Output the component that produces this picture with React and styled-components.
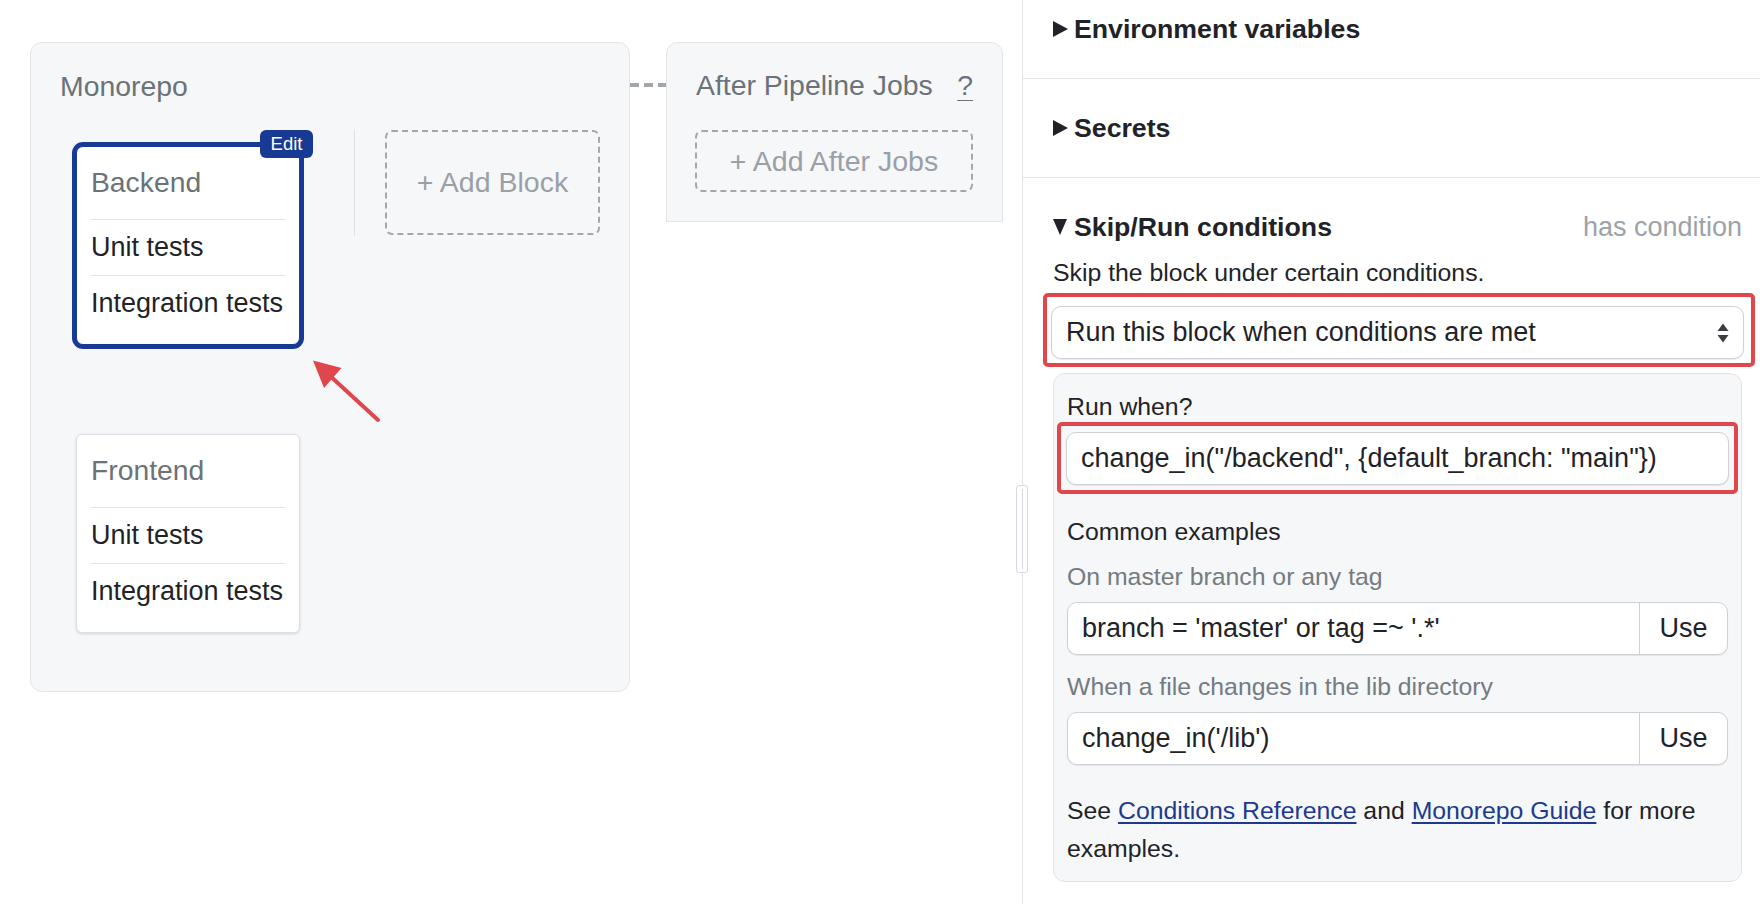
import React from 'react';
import styled, { createGlobalStyle } from 'styled-components';

const GlobalStyle = createGlobalStyle`
  html, body {
    margin: 0;
    padding: 0;
    background: #fff;
  }
  body {
    font-family: "Liberation Sans", Arial, sans-serif;
    color: #1f2328;
    overflow: hidden;
  }
`;

const Page = styled.div`
  display: flex;
  width: 1760px;
  height: 904px;
  overflow: hidden;
`;

/* ---------- canvas (left) ---------- */

const Canvas = styled.div`
  position: relative;
  flex: none;
  width: 1022px;
  box-sizing: border-box;
  padding: 42px 0 0 30px;
  display: flex;
  align-items: flex-start;
`;

const GroupPanel = styled.div`
  flex: none;
  box-sizing: border-box;
  width: ${p => p.$w}px;
  height: ${p => p.$h}px;
  background: #f6f7f9;
  border: 1px solid #e2e5e8;
  border-radius: ${p => p.$flatBottom ? '12px 12px 0 0' : '12px'};
  padding: ${p => p.$pad};
`;

const GroupTitle = styled.h2`
  margin: 0;
  font-size: 28.4px;
  font-weight: 400;
  line-height: 34px;
  color: #6b7278;
`;

const PanelHead = styled.div`
  display: flex;
  align-items: center;
  justify-content: space-between;
  padding-left: 1px;
`;

const Help = styled.span`
  font-size: 28.4px;
  line-height: 34px;
  color: #6b7278;
  text-decoration: underline;
  text-underline-offset: 5px;
  text-decoration-thickness: 1px;
`;

const BlocksRow = styled.div`
  display: flex;
  align-items: flex-start;
  margin-top: 26px;
`;

const CardStack = styled.div`
  display: flex;
  flex-direction: column;
  gap: 89px;
  margin-left: 16px;
  padding-top: 17px;
`;

const BlockCard = styled.div`
  position: relative;
  box-sizing: border-box;
  width: 224px;
  padding: 0 14px 12px;
  background: #fff;
  border: 1px solid ${p => p.$selected ? '#173b94' : '#dcdfe3'};
  border-radius: ${p => p.$selected ? '7px' : '6px'};
  box-shadow: ${p => p.$selected
    ? '0 0 0 4px #173b94'
    : '0 1px 3px rgba(0, 0, 0, 0.14)'};
`;

const EditBadge = styled.span`
  position: absolute;
  top: -17px;
  right: -14px;
  width: 53px;
  height: 28px;
  display: flex;
  align-items: center;
  justify-content: center;
  background: #173b94;
  color: #fff;
  border-radius: 6px;
  font-size: 18.5px;
  line-height: 1;
`;

const CardTitle = styled.div`
  box-sizing: border-box;
  height: 73px;
  padding-top: 19px;
  border-bottom: 1px solid #e3e5e8;
  font-size: 28.3px;
  line-height: 32px;
  color: #6b7278;
`;

const CardItem = styled.div`
  box-sizing: border-box;
  height: 56px;
  padding-top: 11px;
  border-bottom: 1px solid #e3e5e8;
  font-size: 27px;
  line-height: 32px;
  color: #1f2328;
  white-space: nowrap;

  &:last-child {
    border-bottom: none;
  }
`;

const ColumnRule = styled.div`
  flex: none;
  width: 1px;
  height: 107px;
  margin-left: 54px;
  background: #dfe2e5;
`;

const AddBox = styled.div`
  box-sizing: border-box;
  width: ${p => p.$w ? `${p.$w}px` : 'auto'};
  height: ${p => p.$h}px;
  margin: ${p => p.$m || '0'};
  display: flex;
  align-items: center;
  justify-content: center;
  border: 2px dashed #a2a8ad;
  border-radius: 7px;
  font-size: 28.5px;
  color: #9aa0a6;
  white-space: nowrap;
`;

const Connector = styled.div`
  flex: none;
  width: 36px;
  height: 4px;
  margin-top: 41px;
  background: repeating-linear-gradient(to right, #a0a6aa 0 9px, transparent 9px 14px);
`;

const Annotation = styled.svg`
  position: absolute;
  left: 300px;
  top: 350px;
  width: 90px;
  height: 80px;
  overflow: visible;
`;

/* ---------- splitter ---------- */

const Splitter = styled.div`
  position: relative;
  flex: none;
  width: 1px;
  background: #e1e4e7;
`;

const Handle = styled.div`
  position: absolute;
  top: 485px;
  left: -6px;
  box-sizing: border-box;
  width: 12px;
  height: 88px;
  background: #fff;
  border: 1px solid #d5d8dc;
  border-radius: 3px;

  &::after {
    content: "";
    position: absolute;
    left: 5px;
    top: 3px;
    bottom: 3px;
    width: 1px;
    background: #d5d8dc;
  }
`;

/* ---------- sidebar (right) ---------- */

const Sidebar = styled.aside`
  flex: 1;
  min-width: 0;
  overflow: hidden;
`;

const Scroller = styled.div`
  margin-top: -20px;
`;

const Section = styled.section`
  padding: 32px 18px ${p => p.$open ? '0' : '32px'} 30px;
  border-bottom: ${p => p.$open ? 'none' : '1px solid #e1e4e7'};
`;

const SectionHead = styled.div`
  display: flex;
  align-items: center;
  height: 34px;
  font-size: 26.7px;
  font-weight: 700;
  color: #1f2328;
  white-space: nowrap;
`;

const Caret = styled.span`
  flex: none;
  width: 0;
  height: 0;
  margin-right: ${p => p.$open ? '7px' : '6px'};
  ${p => p.$open
    ? `border-top: 16px solid #1f2328;
       border-left: 7.5px solid transparent;
       border-right: 7.5px solid transparent;`
    : `border-left: 15px solid #1f2328;
       border-top: 8.5px solid transparent;
       border-bottom: 8.5px solid transparent;`}
`;

const HeadNote = styled.span`
  margin-left: auto;
  font-weight: 400;
  font-size: 27px;
  color: #9ca2a8;
`;

const Text = styled.p`
  margin: ${p => p.$mt || 0}px 0 0;
  font-size: 24.8px;
  line-height: ${p => p.$lh || 32}px;
  color: ${p => p.$muted ? '#747b81' : '#1f2328'};
`;

const RedFrame = styled.div`
  box-sizing: border-box;
  margin: ${p => p.$m};
  padding: ${p => p.$p};
  border: 4px solid #e0474c;
  border-radius: 5px;
`;

const Field = styled.div`
  box-sizing: border-box;
  height: 53px;
  display: flex;
  align-items: center;
  padding: 0 14px;
  background: #fff;
  border: 1px solid #cdd1d5;
  border-radius: 10px;
  box-shadow: 0 1px 1px rgba(0, 0, 0, 0.08);
  font-size: 27px;
  color: #1f2328;
  white-space: nowrap;
`;

const UpDown = styled.svg`
  margin-left: auto;
  flex: none;
`;

const SubPanel = styled.div`
  margin-top: 6px;
  padding: 17px 13px 13px;
  background: #f6f7f9;
  border: 1px solid #e0e3e6;
  border-radius: 12px;
`;

const InputGroup = styled.div`
  box-sizing: border-box;
  height: 53px;
  margin-top: 9px;
  display: flex;
  background: #fff;
  border: 1px solid #cdd1d5;
  border-radius: 10px;
  box-shadow: 0 1px 1px rgba(0, 0, 0, 0.08);
  overflow: hidden;
  font-size: 27px;
  color: #1f2328;
`;

const GroupInput = styled.div`
  flex: 1;
  display: flex;
  align-items: center;
  padding-left: 14px;
  white-space: nowrap;
`;

const UseButton = styled.div`
  flex: none;
  width: 87px;
  display: flex;
  align-items: center;
  justify-content: center;
  border-left: 1px solid #cdd1d5;
`;

const DocLink = styled.a`
  color: #1c3a8f;
  text-decoration: underline;
  text-underline-offset: 3px;
`;

const examples = [
  { label: 'On master branch or any tag', code: "branch = 'master' or tag =~ '.*'", mt: 13 },
  { label: 'When a file changes in the lib directory', code: "change_in('/lib')", mt: 16 },
];

function Block({ name, selected }) {
  return (
    <BlockCard $selected={selected}>
      {selected && <EditBadge>Edit</EditBadge>}
      <CardTitle>{name}</CardTitle>
      <CardItem>Unit tests</CardItem>
      <CardItem>Integration tests</CardItem>
    </BlockCard>
  );
}

function App() {
  return (
    <>
      <GlobalStyle />
      <Page>
        <Canvas>
          <GroupPanel $w={600} $h={650} $pad="26px 29px 0">
            <GroupTitle>Monorepo</GroupTitle>
            <BlocksRow>
              <CardStack>
                <Block name="Backend" selected />
                <Block name="Frontend" />
              </CardStack>
              <ColumnRule />
              <AddBox $w={215} $h={105} $m="1px 0 0 30px">+ Add Block</AddBox>
            </BlocksRow>
          </GroupPanel>

          <Connector />

          <GroupPanel $w={337} $h={180} $pad="25px 29px 0 28px" $flatBottom>
            <PanelHead>
              <GroupTitle>After Pipeline Jobs</GroupTitle>
              <Help>?</Help>
            </PanelHead>
            <AddBox $h={62} $m="28px 0 0">+ Add After Jobs</AddBox>
          </GroupPanel>

          <Annotation viewBox="300 350 90 80">
            <line x1="378" y1="420" x2="328" y2="374" stroke="#e0474c" strokeWidth="4" strokeLinecap="round" />
            <polygon points="313,360.5 341.5,368 324,388" fill="#e0474c" />
          </Annotation>
        </Canvas>

        <Splitter>
          <Handle />
        </Splitter>

        <Sidebar>
          <Scroller>
            <Section>
              <SectionHead><Caret />Environment variables</SectionHead>
            </Section>
            <Section>
              <SectionHead><Caret />Secrets</SectionHead>
            </Section>
            <Section $open>
              <SectionHead>
                <Caret $open />Skip/Run conditions
                <HeadNote>has condition</HeadNote>
              </SectionHead>
              <Text $mt={13}>Skip the block under certain conditions.</Text>

              <RedFrame $m="4px -13px 0 -10px" $p="9px 7px 4px 4px">
                <Field>
                  Run this block when conditions are met
                  <UpDown width="12" height="20" viewBox="0 0 12 20">
                    <polygon points="6,0.5 11.5,8 0.5,8" fill="#3a3f44" />
                    <polygon points="0.5,12 11.5,12 6,19.5" fill="#3a3f44" />
                  </UpDown>
                </Field>
              </RedFrame>

              <SubPanel>
                <Text>Run when?</Text>
                <RedFrame $m="-1px -10px 0 -10px" $p="6px 5px 5px 5px">
                  <Field>change_in("/backend", {'{'}default_branch: "main"{'}'})</Field>
                </RedFrame>

                <Text $mt={22}>Common examples</Text>
                {examples.map(ex => (
                  <React.Fragment key={ex.code}>
                    <Text $mt={ex.mt} $muted>{ex.label}</Text>
                    <InputGroup>
                      <GroupInput>{ex.code}</GroupInput>
                      <UseButton>Use</UseButton>
                    </InputGroup>
                  </React.Fragment>
                ))}

                <Text $mt={27} $lh={38}>
                  See <DocLink href="#">Conditions Reference</DocLink> and{' '}
                  <DocLink href="#">Monorepo Guide</DocLink> for more examples.
                </Text>
              </SubPanel>
            </Section>
          </Scroller>
        </Sidebar>
      </Page>
    </>
  );
}

export default App;
